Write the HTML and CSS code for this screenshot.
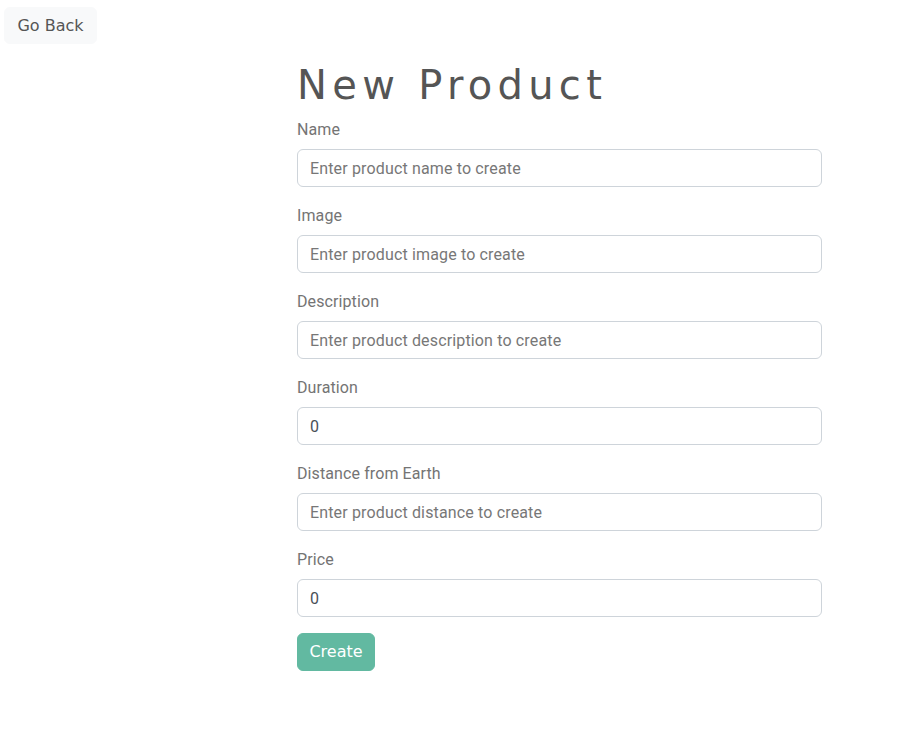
FILE: index.html
```html
<!DOCTYPE html>
<html>
<head>
<meta charset="utf-8">
<link rel="stylesheet" href="styles.css">
</head>
<body>
<div class="top">
  <button class="btn btn-light">Go Back</button>
</div>
<main class="form-wrap">
  <h1 class="title">New Product</h1>
  <form>
    <div class="group">
      <label class="label">Name</label>
      <input class="input" type="text" placeholder="Enter product name to create">
    </div>
    <div class="group">
      <label class="label">Image</label>
      <input class="input" type="text" placeholder="Enter product image to create">
    </div>
    <div class="group">
      <label class="label">Description</label>
      <input class="input" type="text" placeholder="Enter product description to create">
    </div>
    <div class="group">
      <label class="label">Duration</label>
      <input class="input" type="text" value="0">
    </div>
    <div class="group">
      <label class="label">Distance from Earth</label>
      <input class="input" type="text" placeholder="Enter product distance to create">
    </div>
    <div class="group">
      <label class="label">Price</label>
      <input class="input" type="text" value="0">
    </div>
    <button class="btn btn-create" type="button">Create</button>
  </form>
</main>
</body>
</html>
```
FILE: styles.css
```css
* { box-sizing: border-box; }
body {
  margin: 0;
  background: #fff;
  font-family: Roboto, "Liberation Sans", sans-serif;
  font-size: 16px;
  color: #212529;
}
.top {
  padding: 7px 4px 0;
  height: 44px;
}
.btn {
  display: inline-block;
  font-family: "DejaVu Sans", sans-serif;
  font-size: 16px;
  font-weight: 400;
  line-height: 24px;
  padding: 6px 12px;
  border: 1px solid transparent;
  border-radius: 6px;
  cursor: pointer;
}
.btn-light {
  background: #f8f9fa;
  border-color: #f8f9fa;
  color: #555;
  width: 93px;
  height: 37px;
  padding: 0;
}
.btn-create {
  background: #62b9a1;
  border-color: #62b9a1;
  color: #fff;
  width: 78px;
  height: 38px;
  padding: 0;
}
.form-wrap {
  margin-left: 297px;
  width: 525px;
  padding-top: 17px;
}
.title {
  margin: 0 0 8px;
  font-family: "DejaVu Sans", sans-serif;
  font-weight: 400;
  font-size: 40px;
  line-height: 48px;
  letter-spacing: 5.3px;
  color: #555;
}
.group {
  margin-bottom: 16px;
}
.label {
  display: block;
  margin-bottom: 8px;
  line-height: 24px;
  padding-top: 1px;
  height: 24px;
  color: #747474;
  font-size: 16px;
  letter-spacing: 0.1px;
}
.input {
  display: block;
  width: 100%;
  height: 38px;
  padding: 6px 12px;
  font-family: Roboto, "Liberation Sans", sans-serif;
  font-size: 16px;
  line-height: 24px;
  letter-spacing: 0.15px;
  color: #495057;
  background: #fff;
  border: 1px solid #ced4da;
  border-radius: 6px;
  outline: none;
}
.input::placeholder {
  color: #777;
  opacity: 1;
}
```
